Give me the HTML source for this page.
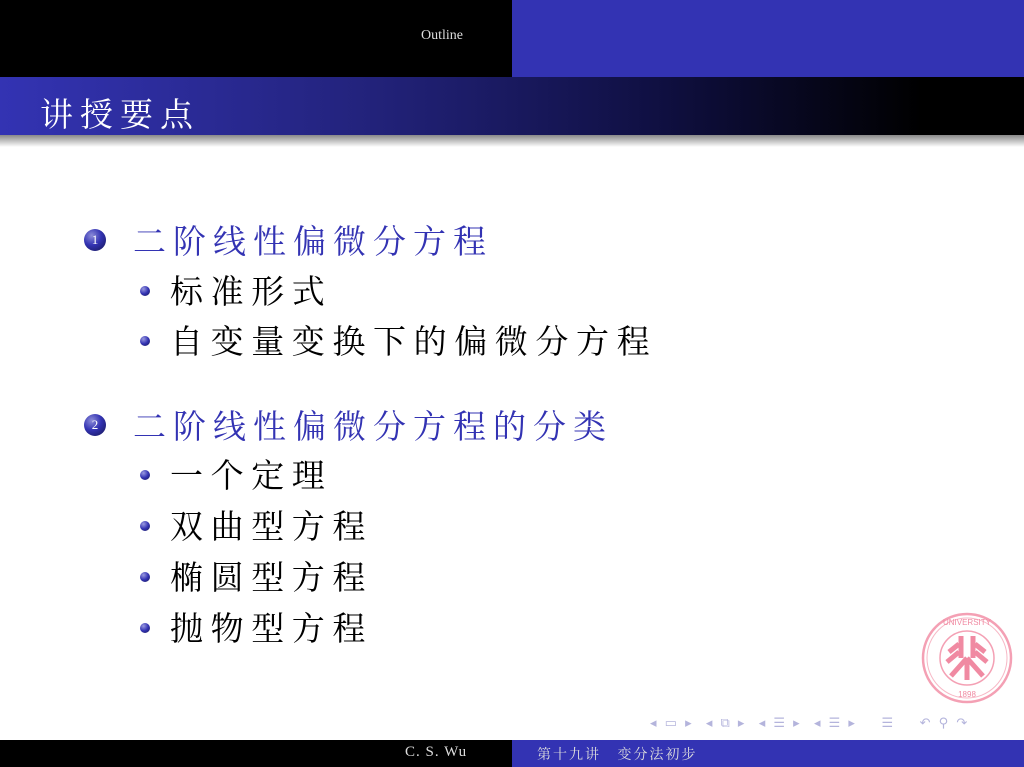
<!DOCTYPE html>
<html><head><meta charset="utf-8"><style>
*{margin:0;padding:0}
body{width:1024px;height:767px;position:relative;background:#fff;overflow:hidden;font-family:"Liberation Serif","Noto Serif CJK SC",serif}
.abs{position:absolute}
.cjk{font-family:"Liberation Serif","Noto Serif CJK SC",serif;white-space:nowrap}
.main{color:#3333b3;font-size:33px;letter-spacing:7px;left:133px}
.sub{color:#000;font-size:33px;letter-spacing:7.6px;left:170px}
.num{left:84px;width:22px;height:22px;border-radius:50%;background:radial-gradient(circle at 35% 30%,#8c8cd8,#3333b3 45%,#141450);color:#fff;font-size:13px;text-align:center;line-height:22px}
.dot{left:140px;width:10px;height:10px;border-radius:50%;background:radial-gradient(circle at 35% 30%,#9a9ae0,#3333b3 50%,#161650)}
</style></head><body>
<div class="abs" style="left:0;top:0;width:512px;height:77px;background:#000"></div>
<div class="abs" style="left:512px;top:0;width:512px;height:77px;background:#3333b3"></div>
<div class="abs" style="left:421px;top:28px;color:#ddd;font-size:14px">Outline</div>
<div class="abs" style="left:0;top:77px;width:1024px;height:58px;background:linear-gradient(90deg,#3333b3 0%,#23237d 35%,#0f0f40 65%,#000 90%)"></div>
<div class="abs" style="left:0;top:135px;width:1024px;height:12px;background:linear-gradient(#888,#fff)"></div>
<div class="abs cjk" style="left:40px;top:89px;color:#fff;font-size:33px;letter-spacing:7px">讲授要点</div>

<div class="abs num" style="top:229px">1</div>
<div class="abs cjk main" style="top:216px">二阶线性偏微分方程</div>
<div class="abs dot" style="top:286px"></div>
<div class="abs cjk sub" style="top:266px">标准形式</div>
<div class="abs dot" style="top:336px"></div>
<div class="abs cjk sub" style="top:316px">自变量变换下的偏微分方程</div>

<div class="abs num" style="top:414px">2</div>
<div class="abs cjk main" style="top:401px">二阶线性偏微分方程的分类</div>
<div class="abs dot" style="top:470px"></div>
<div class="abs cjk sub" style="top:450px">一个定理</div>
<div class="abs dot" style="top:521px"></div>
<div class="abs cjk sub" style="top:501px">双曲型方程</div>
<div class="abs dot" style="top:572px"></div>
<div class="abs cjk sub" style="top:552px">椭圆型方程</div>
<div class="abs dot" style="top:623px"></div>
<div class="abs cjk sub" style="top:603px">抛物型方程</div>

<svg class="abs" style="left:921px;top:612px" width="92" height="92" viewBox="0 0 92 92">
<circle cx="46" cy="46" r="44" fill="none" stroke="#f4a0b4" stroke-width="2.5"/>
<circle cx="46" cy="46" r="40" fill="none" stroke="#f7b8c6" stroke-width="1"/>
<circle cx="46" cy="46" r="27" fill="none" stroke="#f4a0b4" stroke-width="1.5"/>
<path d="M40 24v22M52 24v22M46 46L30 64M46 46L62 64M46 46v22M38 32l-10 8M54 32l10 8M38 40l-12 10M54 40l12 10" stroke="#f08aa2" stroke-width="5" fill="none"/>
<text x="46" y="13" font-size="8" fill="#f08aa2" text-anchor="middle" font-family="Liberation Sans">UNIVERSITY</text>
<text x="46" y="85" font-size="8" fill="#f08aa2" text-anchor="middle" font-family="Liberation Sans">1898</text>
</svg>

<div class="abs" style="left:650px;top:716px;color:#b4b4dc;font-size:13px;letter-spacing:2px;font-family:'DejaVu Sans',sans-serif;white-space:nowrap">◂ ▭ ▸ &nbsp;◂ ⧉ ▸ &nbsp;◂ ☰ ▸ &nbsp;◂ ☰ ▸ &nbsp;&nbsp; ☰ &nbsp;&nbsp; ↶ ⚲ ↷</div>

<div class="abs" style="left:0;top:740px;width:512px;height:27px;background:#000"></div>
<div class="abs" style="left:512px;top:740px;width:512px;height:27px;background:#3333b3"></div>
<div class="abs" style="left:405px;top:744px;color:#ddd;font-size:15px;letter-spacing:1px">C. S. Wu</div>
<div class="abs cjk" style="left:537px;top:744px;color:#ddd;font-size:14px;letter-spacing:2px">第十九讲&nbsp;&nbsp; 变分法初步</div>
</body></html>
